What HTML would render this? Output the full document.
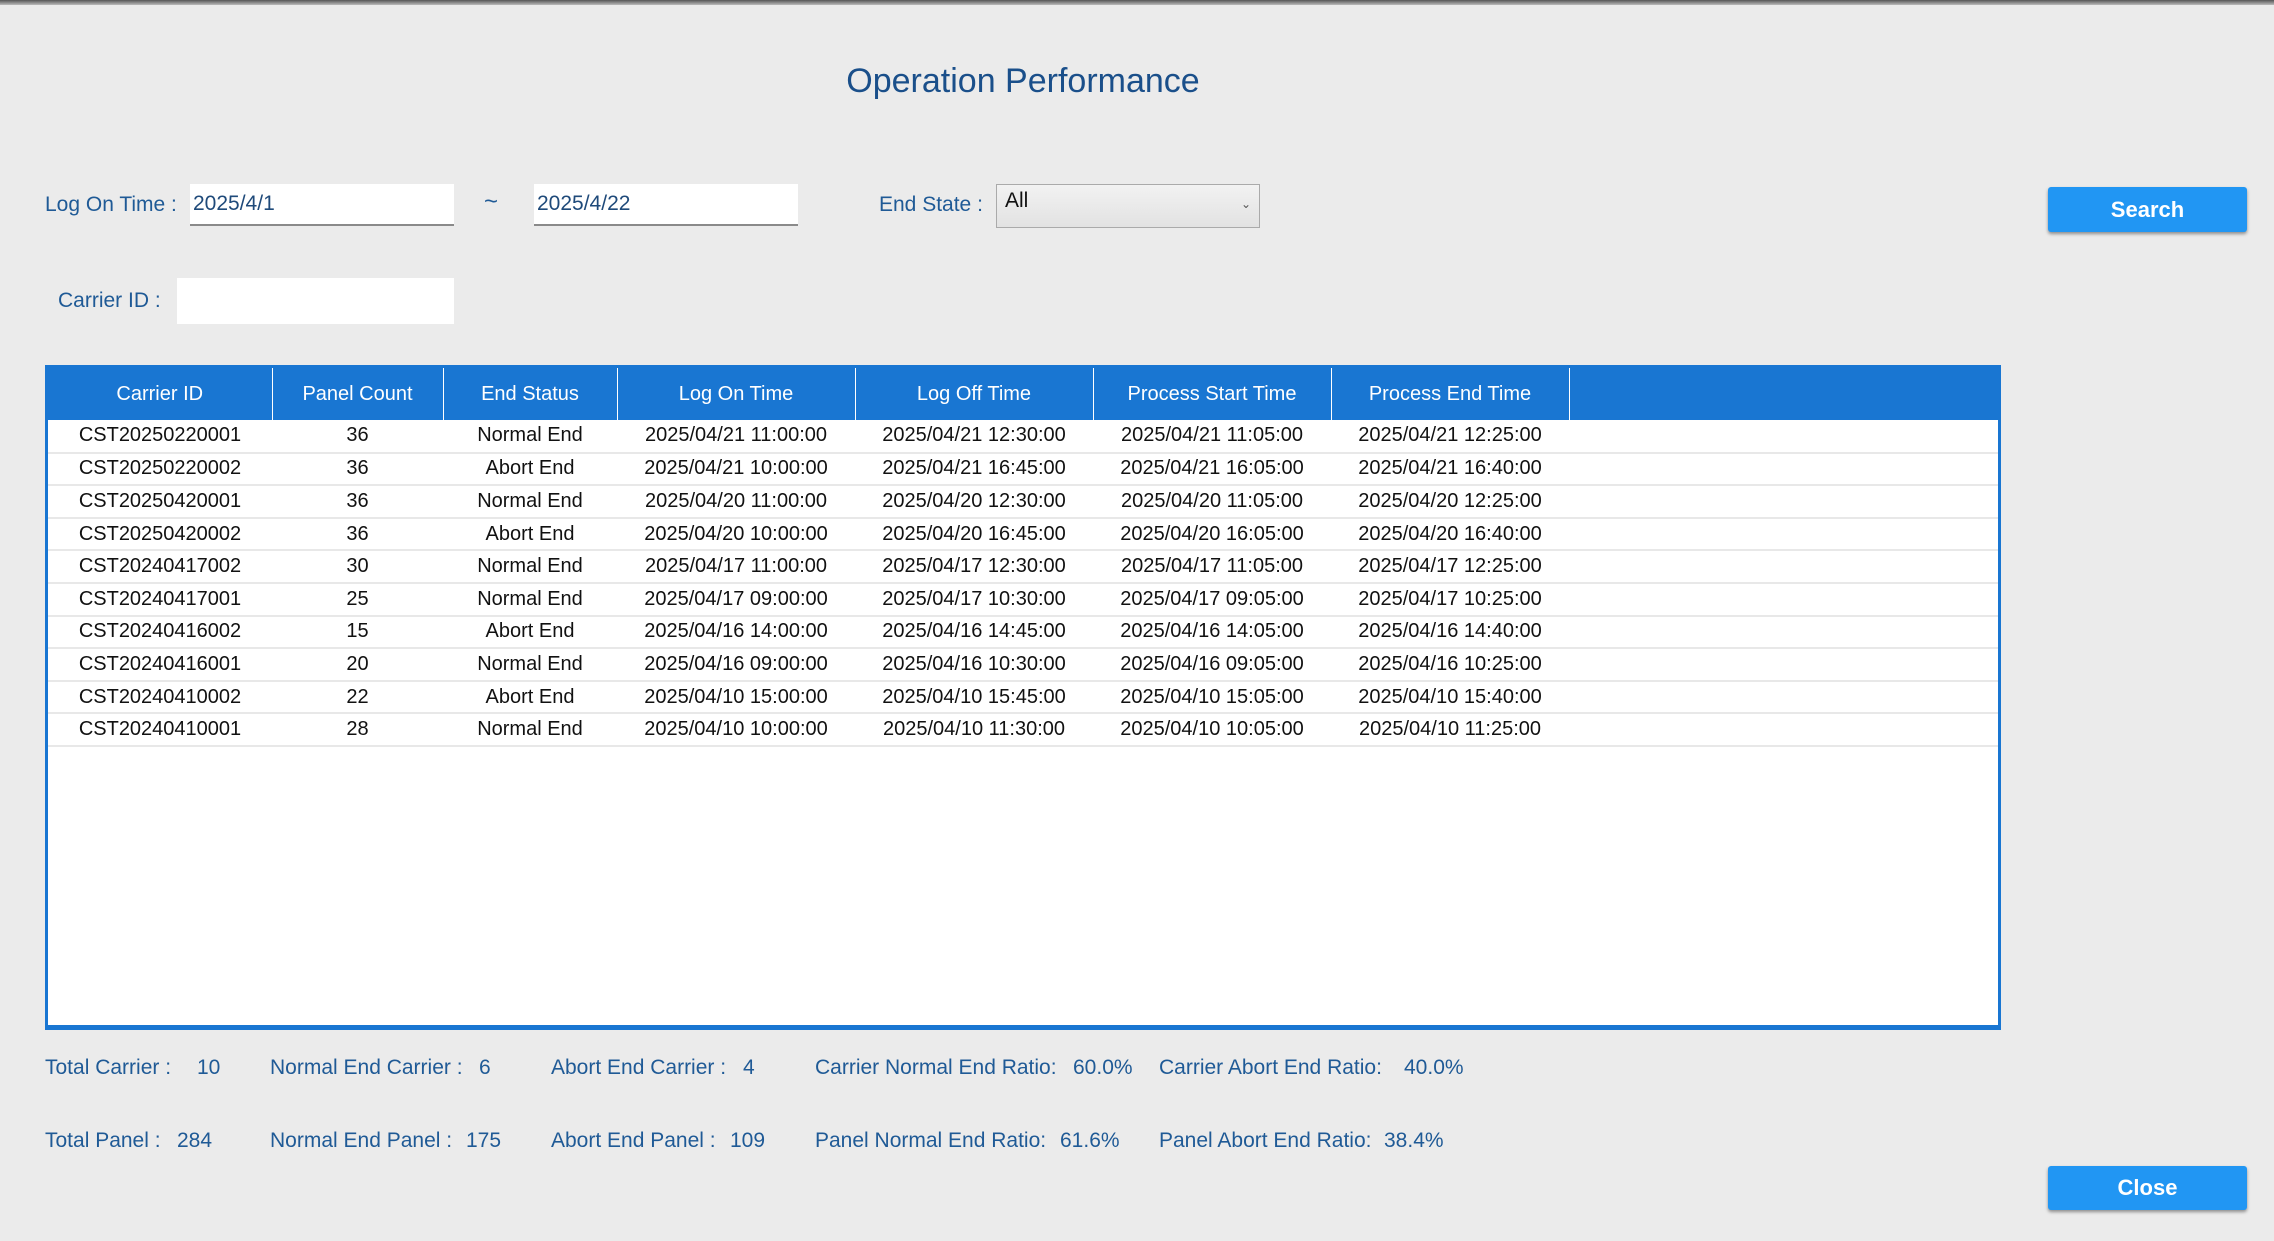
<!DOCTYPE html>
<html><head><meta charset="utf-8"><style>
*{margin:0;padding:0;box-sizing:border-box}
body{width:2274px;height:1241px;background:#ebebeb;font-family:"Liberation Sans",sans-serif;position:relative;overflow:hidden;color:#1f5a96}
.a{position:absolute;white-space:nowrap}
.topbar{left:0;top:0;width:2274px;height:5px;background:linear-gradient(#555,#bbb)}
.lbl{font-size:21px;color:#1f5a96;line-height:1}
.inp{background:#fff;border-bottom:2px solid #8a8a8a;font-size:21px;color:#1f4a7a;padding:8px 3px}
.btn{background:#2196f3;color:#fff;font-weight:bold;font-size:22px;text-align:center;border-radius:3px;box-shadow:0 2px 3px rgba(0,0,0,.4)}
table{border-collapse:collapse;font-size:20px;color:#111}
th{background:#1976d2;color:#fff;font-weight:normal;height:52px;border-right:1px solid #fff;text-align:center}
td{height:32.6px;text-align:center;border-bottom:2px solid #e8e8e8;padding:0}
</style></head><body>
<div class="a topbar"></div>
<div class="a" style="left:0;width:2046px;top:62px;text-align:center;font-size:34px;color:#1a4f8a">Operation Performance</div>

<div class="a lbl" style="left:45px;top:194px">Log On Time :</div>
<div class="a inp" style="left:190px;top:184px;width:264px;height:42px">2025/4/1</div>
<div class="a lbl" style="left:484px;top:190px;font-size:24px">~</div>
<div class="a inp" style="left:534px;top:184px;width:264px;height:42px">2025/4/22</div>
<div class="a lbl" style="left:879px;top:194px">End State :</div>
<div class="a" style="left:996px;top:184px;width:264px;height:44px;background:linear-gradient(#f2f2f2,#e2e2e2);border:1px solid #aaa;font-size:21px;color:#111;padding:4px 8px">All<span style="position:absolute;right:8px;top:12px;font-size:12px;color:#555">⌄</span></div>
<div class="a btn" style="left:2048px;top:187px;width:199px;height:45px;line-height:45px">Search</div>

<div class="a lbl" style="left:58px;top:290px">Carrier ID :</div>
<div class="a" style="left:177px;top:278px;width:277px;height:46px;background:#fff"></div>

<div class="a" style="left:45px;top:365px;width:1956px;height:665px;border:3px solid #1976d2;border-bottom-width:5px;background:#fff">
<table style="width:1950px">
<tr><th style="width:224px">Carrier ID</th><th style="width:171px">Panel Count</th><th style="width:174px">End Status</th><th style="width:238px">Log On Time</th><th style="width:238px">Log Off Time</th><th style="width:238px">Process Start Time</th><th style="width:238px">Process End Time</th><th style="border-right:none"></th></tr>
<tr><td>CST20250220001</td><td>36</td><td>Normal End</td><td>2025/04/21 11:00:00</td><td>2025/04/21 12:30:00</td><td>2025/04/21 11:05:00</td><td>2025/04/21 12:25:00</td><td></td></tr>
<tr><td>CST20250220002</td><td>36</td><td>Abort End</td><td>2025/04/21 10:00:00</td><td>2025/04/21 16:45:00</td><td>2025/04/21 16:05:00</td><td>2025/04/21 16:40:00</td><td></td></tr>
<tr><td>CST20250420001</td><td>36</td><td>Normal End</td><td>2025/04/20 11:00:00</td><td>2025/04/20 12:30:00</td><td>2025/04/20 11:05:00</td><td>2025/04/20 12:25:00</td><td></td></tr>
<tr><td>CST20250420002</td><td>36</td><td>Abort End</td><td>2025/04/20 10:00:00</td><td>2025/04/20 16:45:00</td><td>2025/04/20 16:05:00</td><td>2025/04/20 16:40:00</td><td></td></tr>
<tr><td>CST20240417002</td><td>30</td><td>Normal End</td><td>2025/04/17 11:00:00</td><td>2025/04/17 12:30:00</td><td>2025/04/17 11:05:00</td><td>2025/04/17 12:25:00</td><td></td></tr>
<tr><td>CST20240417001</td><td>25</td><td>Normal End</td><td>2025/04/17 09:00:00</td><td>2025/04/17 10:30:00</td><td>2025/04/17 09:05:00</td><td>2025/04/17 10:25:00</td><td></td></tr>
<tr><td>CST20240416002</td><td>15</td><td>Abort End</td><td>2025/04/16 14:00:00</td><td>2025/04/16 14:45:00</td><td>2025/04/16 14:05:00</td><td>2025/04/16 14:40:00</td><td></td></tr>
<tr><td>CST20240416001</td><td>20</td><td>Normal End</td><td>2025/04/16 09:00:00</td><td>2025/04/16 10:30:00</td><td>2025/04/16 09:05:00</td><td>2025/04/16 10:25:00</td><td></td></tr>
<tr><td>CST20240410002</td><td>22</td><td>Abort End</td><td>2025/04/10 15:00:00</td><td>2025/04/10 15:45:00</td><td>2025/04/10 15:05:00</td><td>2025/04/10 15:40:00</td><td></td></tr>
<tr><td>CST20240410001</td><td>28</td><td>Normal End</td><td>2025/04/10 10:00:00</td><td>2025/04/10 11:30:00</td><td>2025/04/10 10:05:00</td><td>2025/04/10 11:25:00</td><td></td></tr>
</table></div>

<div class="a lbl" style="left:45px;top:1057px">Total Carrier :</div><div class="a lbl" style="left:197px;top:1057px">10</div>
<div class="a lbl" style="left:270px;top:1057px">Normal End Carrier :</div><div class="a lbl" style="left:479px;top:1057px">6</div>
<div class="a lbl" style="left:551px;top:1057px">Abort End Carrier :</div><div class="a lbl" style="left:743px;top:1057px">4</div>
<div class="a lbl" style="left:815px;top:1057px">Carrier Normal End Ratio:</div><div class="a lbl" style="left:1073px;top:1057px">60.0%</div>
<div class="a lbl" style="left:1159px;top:1057px">Carrier Abort End Ratio:</div><div class="a lbl" style="left:1404px;top:1057px">40.0%</div>

<div class="a lbl" style="left:45px;top:1130px">Total Panel :</div><div class="a lbl" style="left:177px;top:1130px">284</div>
<div class="a lbl" style="left:270px;top:1130px">Normal End Panel :</div><div class="a lbl" style="left:466px;top:1130px">175</div>
<div class="a lbl" style="left:551px;top:1130px">Abort End Panel :</div><div class="a lbl" style="left:730px;top:1130px">109</div>
<div class="a lbl" style="left:815px;top:1130px">Panel Normal End Ratio:</div><div class="a lbl" style="left:1060px;top:1130px">61.6%</div>
<div class="a lbl" style="left:1159px;top:1130px">Panel Abort End Ratio:</div><div class="a lbl" style="left:1384px;top:1130px">38.4%</div>

<div class="a btn" style="left:2048px;top:1166px;width:199px;height:44px;line-height:44px">Close</div>
</body></html>
